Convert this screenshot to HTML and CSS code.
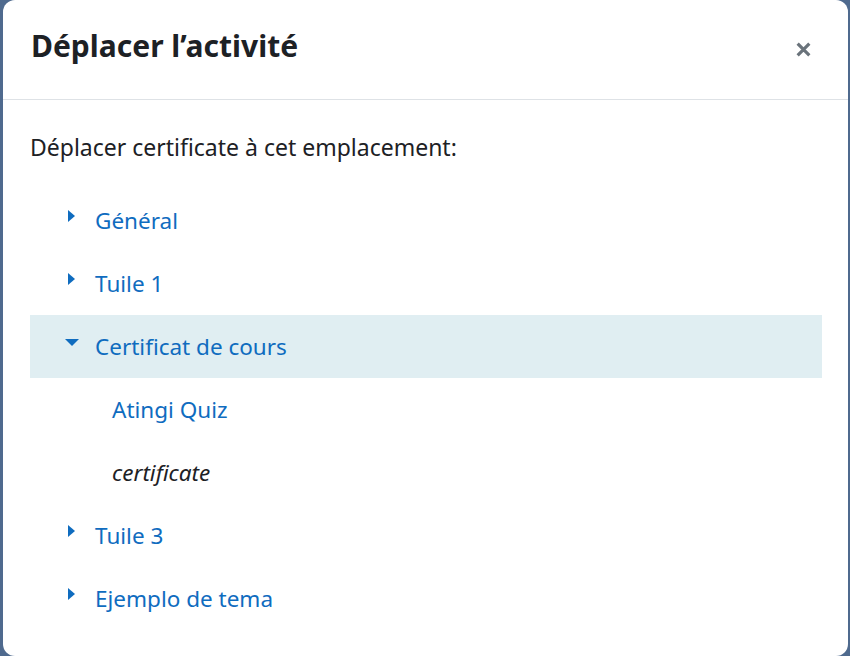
FILE: index.html
```html
<!doctype html>
<html lang="fr">

<head>
    <title>Déplacer l’activité</title>
    <meta charset="utf-8" />
    <meta name="viewport" content="width=device-width, initial-scale=1.0" />
    <link rel="stylesheet" href="styles.css">
</head>

<body>
    <div class="modal">
        <div class="modal-header">
            <h2 class="modal-title">Déplacer l’activité</h2>
            <button class="close" aria-label="Fermer">
                <svg width="17" height="17" viewBox="0 0 16 16">
                    <path d="M2.5 2.5 L13.5 13.5 M13.5 2.5 L2.5 13.5" stroke="currentColor" stroke-width="3" stroke-linecap="butt" />
                </svg>
            </button>
        </div>

        <div class="modal-body">
            <p class="intro">Déplacer certificate à cet emplacement:</p>

            <ul class="tree">
                <li class="node">
                    <span class="caret right"></span>
                    <a href="#">Général</a>
                </li>
                <li class="node">
                    <span class="caret right"></span>
                    <a href="#">Tuile 1</a>
                </li>
                <li class="node current">
                    <span class="caret down"></span>
                    <a href="#">Certificat de cours</a>
                </li>
                <li class="node child">
                    <a href="#">Atingi Quiz</a>
                </li>
                <li class="node child">
                    <em>certificate</em>
                </li>
                <li class="node">
                    <span class="caret right"></span>
                    <a href="#">Tuile 3</a>
                </li>
                <li class="node">
                    <span class="caret right"></span>
                    <a href="#">Ejemplo de tema</a>
                </li>
            </ul>
        </div>
    </div>
</body>

</html>
```

FILE: styles.css
```css
html,
body {
    margin: 0;
    height: 100%;
}

body {
    font-family: "Noto Sans", sans-serif;
    background-color: #4f6a8e;
    color: #1d2125;
    padding: 0 2px 0 3px;
    box-sizing: border-box;
    overflow: hidden;
}

.modal {
    background-color: #fff;
    height: 656px;
    border-radius: 12px;
}

.modal-header {
    display: flex;
    align-items: center;
    justify-content: space-between;
    height: 100px;
    padding: 0 36px 0 28px;
    border-bottom: 1px solid #dee2e6;
    box-sizing: border-box;
}

.modal-title {
    margin: 0;
    font-size: 30px;
    font-weight: bold;
    padding-bottom: 8px;
}

.close {
    background: none;
    border: none;
    padding: 0;
    color: #6a737b;
    cursor: pointer;
    display: flex;
}

.modal-body {
    padding: 0 26px 0 27px;
}

.intro {
    margin: 0;
    padding: 31px 0 0;
    font-size: 23px;
    line-height: 32px;
}

.tree {
    list-style: none;
    margin: 0;
    padding: 26px 0 0;
}

.node {
    display: flex;
    align-items: center;
    height: 63px;
    padding-left: 34px;
    font-size: 22.5px;
}

.node a {
    color: #0f6cbf;
    text-decoration: none;
}

.node.current {
    background-color: #e0eef2;
}

.node.child {
    padding-left: 82px;
}

.caret {
    width: 16px;
    margin-right: 15px;
    height: 22px;
    position: relative;
}

.caret.right::before {
    content: "";
    position: absolute;
    left: 4px;
    top: 0;
    border-left: 7px solid #0f6cbf;
    border-top: 6px solid transparent;
    border-bottom: 6px solid transparent;
}

.caret.down::before {
    content: "";
    position: absolute;
    left: 1px;
    top: 3px;
    border-top: 7px solid #0f6cbf;
    border-left: 7px solid transparent;
    border-right: 7px solid transparent;
}
```
